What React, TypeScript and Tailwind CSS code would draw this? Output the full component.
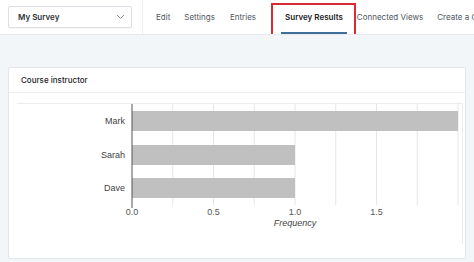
import React from 'react';

const tabs = [
  { label: 'Edit', className: 'ml-[13px]' },
  { label: 'Settings', className: 'ml-[14px]' },
  { label: 'Entries', className: 'ml-[15px]' },
];

const rows = [
  { name: 'Mark', value: 2, y: 7 },
  { name: 'Sarah', value: 1, y: 41 },
  { name: 'Dave', value: 1, y: 74 },
];

const axisX = 115;
const unit = 163;

function Chart() {
  const grid = [0.25, 0.5, 0.75, 1, 1.25, 1.5, 1.75, 2];
  const ticks = [0, 0.5, 1, 1.5];
  return (
    <svg width="446" height="140" className="block">
      {grid.map((g) => (
        <line key={g} x1={axisX + g * unit} y1={0} x2={axisX + g * unit} y2={101} stroke="#e6e6e6" strokeWidth="1" />
      ))}
      {rows.map((r) => (
        <g key={r.name}>
          <rect x={axisX} y={r.y} width={r.value * unit} height={20} fill="#c0c0c0" />
          <text x={108} y={r.y + 13} textAnchor="end" fontSize="9" fill="#444" fontFamily="Liberation Sans, Arial, sans-serif">
            {r.name}
          </text>
        </g>
      ))}
      <line x1={axisX} y1={0} x2={axisX} y2={104} stroke="#555" strokeWidth="1" />
      {ticks.map((t) => (
        <text key={t} x={axisX + t * unit} y={111} textAnchor="middle" fontSize="9" fill="#555" fontFamily="Liberation Sans, Arial, sans-serif">
          {t.toFixed(1)}
        </text>
      ))}
      <text x={axisX + unit} y={122} textAnchor="middle" fontSize="9" fontStyle="italic" fill="#444" fontFamily="Liberation Sans, Arial, sans-serif">
        Frequency
      </text>
    </svg>
  );
}

export default function App() {
  return (
    <div className="w-[474px] h-[262px] overflow-hidden bg-[#f3f6f9] font-['Inter',sans-serif]">
      {/* top bar */}
      <div className="h-[35px] bg-white border-b border-[#e6e9ed] flex items-stretch">
        <div className="flex items-center pl-2 pr-[10px] border-r border-[#eceef1]">
          <div className="w-[124px] h-[22px] border border-[#dcdfe3] rounded-[2px] flex items-center justify-between pl-[9px] pr-[6px] shadow-[0_1px_1px_rgba(0,0,0,0.04)]">
            <span className="text-[8px] font-semibold text-[#2c3338]">My Survey</span>
            <svg width="9" height="6" viewBox="0 0 9 6" className="text-[#8c8f94]">
              <path d="M1 1l3.5 3.5L8 1" stroke="currentColor" strokeWidth="1" fill="none" />
            </svg>
          </div>
        </div>
        <div className="flex items-center whitespace-nowrap text-[8px] text-[#50575e] min-w-0 overflow-hidden">
          {tabs.map((t) => (
            <span key={t.label} className={t.className}>
              {t.label}
            </span>
          ))}
          <div className="relative ml-[25px] h-full flex items-center px-[4px] text-[#1d2327] font-semibold">
            <span>Survey Results</span>
            <div className="absolute left-0 right-0 bottom-0 h-[2px] bg-[#3f6e98]" />
            <div className="absolute left-[-10px] right-[-9px] top-[3px] h-[38px] border-2 border-[#d92b35]" />
          </div>
          <span className="ml-[10px]">Connected Views</span>
          <span className="ml-[14px]">Create a Chart</span>
        </div>
      </div>

      {/* results card */}
      <div className="ml-2 mt-[32px] w-[458px] h-[192px] bg-white border border-[#e3e6ea] rounded-[2px]">
        <div className="h-[25px] flex items-center px-3 border-b border-[#eceef1] text-[8px] font-medium text-[#1d2327]">
          Course instructor
        </div>
        <div className="pl-2 pt-[10px]">
          <div className="w-[446px] border-t border-r border-[#ececec]">
            <Chart />
          </div>
        </div>
      </div>
    </div>
  );
}
